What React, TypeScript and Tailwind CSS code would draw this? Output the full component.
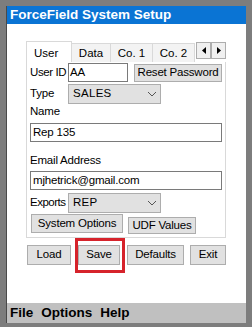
import React from "react";

const ui = { fontFamily: '"Liberation Sans", Arial, sans-serif' };
const head = { fontFamily: '"Liberation Sans", Arial, sans-serif' };

function Btn({ label, className }: { label: string; className: string }) {
  return (
    <div
      className={`flex shrink-0 items-center justify-center whitespace-nowrap bg-[#e1e1e1] border border-[#adadad] text-[11.5px] tracking-[-0.2px] text-black ${className}`}
    >
      {label}
    </div>
  );
}

function Select({ value }: { value: string }) {
  return (
    <div className="flex shrink-0 items-center justify-between w-[93px] h-[20px] bg-[#e1e1e1] border border-[#adadad] pl-[4px] pr-[3px] text-[11.5px]">
      <span className="tracking-[0.3px]">{value}</span>
      <svg width="10" height="6" viewBox="0 0 10 6">
        <path d="M1 1 L5 5 L9 1" fill="none" stroke="#555" strokeWidth="1" />
      </svg>
    </div>
  );
}

function Arrow({ dir }: { dir: "l" | "r" }) {
  return (
    <div className="flex items-center justify-center w-[15px] h-[17px] bg-[#f0f0f0] border border-[#adadad]">
      <svg width="4" height="7" viewBox="0 0 4 7">
        {dir === "l" ? <path d="M4 0 L0 3.5 L4 7 Z" fill="#000" /> : <path d="M0 0 L4 3.5 L0 7 Z" fill="#000" />}
      </svg>
    </div>
  );
}

export default function App() {
  const tabs = [
    { label: "Data", w: "w-[39px]" },
    { label: "Co. 1", w: "w-[42px]" },
    { label: "Co. 2", w: "w-[42px]" },
  ];

  return (
    <div className="w-[252px] h-[327px] bg-[#7d7d7d] pl-[6px] pr-[6px] pt-[6px] pb-[4px] flex flex-col" style={ui}>
      <div className="flex flex-col flex-1 border-l border-[#4a4a4a]">
        {/* Title */}
        <div
          className="h-[18px] bg-[#0a74d4] text-white font-bold text-[13.5px] leading-[18px] pl-[3px] whitespace-nowrap"
          style={head}
        >
          ForceField System Setup
        </div>

        {/* Body */}
        <div className="relative flex-1 bg-white pl-[19px] pt-[17px] whitespace-nowrap">
          {/* Tabs header */}
          <div className="flex items-end h-[21px] w-[200px]">
            <div className="w-[46px] h-[21px] bg-white border border-b-0 border-[#d9d9d9] text-[11.5px] pl-[7px] pt-[3px]">
              User
            </div>
            {tabs.map((t) => (
              <div
                key={t.label}
                className={`${t.w} h-[19px] bg-[#f3f3f3] border-t border-r border-[#d9d9d9] text-[11.5px] flex items-center justify-center pt-[1px]`}
              >
                {t.label}
              </div>
            ))}
            <div className="flex self-start mt-[1px] ml-[1px]">
              <Arrow dir="l" />
              <Arrow dir="r" />
            </div>
          </div>

          {/* Panel */}
          <div className="w-[200px] border border-t-0 border-[#d9d9d9] pl-[3px] pb-[2px] text-[11.5px] tracking-[-0.2px] text-black">
            <div className="flex items-center h-[20px] pt-[1px]">
              <span className="w-[38px] shrink-0 tracking-[-0.4px]">User ID</span>
              <div className="w-[60px] shrink-0 h-[19px] border border-[#7a7a7a] pl-[1px] leading-[17px]">AA</div>
              <Btn label="Reset Password" className="ml-[6px] w-[88px] h-[18px]" />
            </div>

            <div className="flex items-start h-[20px] mt-[2px]">
              <span className="w-[38px] shrink-0 pt-[1px]">Type</span>
              <Select value="SALES" />
            </div>

            <div className="h-[14px] leading-[14px]">Name</div>
            <div className="w-[192px] h-[19px] border border-[#7a7a7a] mt-[5px] pl-[2px] leading-[17px]">Rep 135</div>

            <div className="h-[14px] leading-[14px] mt-[11px]">Email Address</div>
            <div className="w-[192px] h-[19px] border border-[#7a7a7a] mt-[4px] pl-[2px] leading-[17px]">mjhetrick@gmail.com</div>

            <div className="flex items-start h-[20px] mt-[3px]">
              <span className="w-[38px] shrink-0 tracking-[-0.5px] pt-[1px]">Exports</span>
              <Select value="REP" />
            </div>

            <div className="flex items-start h-[21px] mt-[1px]">
              <Btn label="System Options" className="ml-[1px] w-[92px] h-[19px]" />
              <Btn label="UDF Values" className="ml-[5px] mt-[3px] w-[68px] h-[17px]" />
            </div>
          </div>

          {/* Bottom buttons */}
          <div className="flex mt-[7px] h-[20px]">
            <Btn label="Load" className="ml-[1px] w-[44px] h-[20px]" />
            <Btn label="Save" className="ml-[7px] w-[42px] h-[20px]" />
            <Btn label="Defaults" className="ml-[7px] w-[57px] h-[20px]" />
            <Btn label="Exit" className="ml-[6px] w-[36px] h-[20px]" />
          </div>

          {/* annotation box */}
          <div className="absolute left-[68px] top-[214px] w-[50px] h-[35px] border-[3px] border-[#d6232b]" />
        </div>

        {/* Menu */}
        <div
          className="h-[20px] bg-[#c0c0c0] text-black font-bold text-[13.5px] leading-[20px] pl-[3px] flex gap-[8px]"
          style={head}
        >
          <span>File</span>
          <span>Options</span>
          <span>Help</span>
        </div>
      </div>
    </div>
  );
}
